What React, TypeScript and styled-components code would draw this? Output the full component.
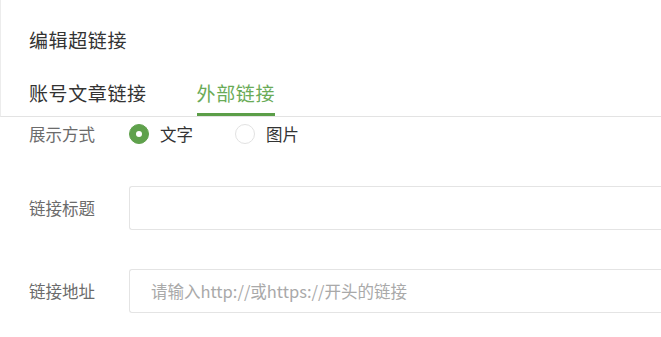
import React, { useState } from "react";
import styled, { createGlobalStyle } from "styled-components";

const Global = createGlobalStyle`
  html, body { margin: 0; padding: 0; background: #fff; overflow: hidden; }
  body { font-family: "Noto Sans CJK SC", "Noto Sans", sans-serif; }
  * { box-sizing: border-box; }
`;

const Page = styled.div`
  width: 661px;
  height: 337px;
  background: #fff;
  display: flex;
  flex-direction: column;
`;

const Header = styled.div`
  border-left: 1px solid #ececec;
  border-bottom: 1px solid #e3e3e3;
  padding: 26px 0 0 28px;
`;

const Title = styled.div`
  font-size: 19px;
  letter-spacing: 0.6px;
  line-height: 28px;
  color: #333;
`;

const Tabs = styled.div`
  display: flex;
  gap: 50px;
  margin-top: 25px;
`;

const Tab = styled.div<{ $active?: boolean }>`
  font-size: 19px;
  letter-spacing: 0.6px;
  line-height: 28px;
  padding-bottom: 6px;
  color: ${(p) => (p.$active ? "#6aab57" : "#333")};
  border-bottom: 3px solid ${(p) => (p.$active ? "#5b9e48" : "transparent")};
  cursor: pointer;
`;

const Form = styled.div`
  display: flex;
  flex-direction: column;
  padding-left: 29px;
`;

const Row = styled.div<{ $top: number; $h: number }>`
  display: flex;
  align-items: center;
  height: ${(p) => p.$h}px;
  margin-top: ${(p) => p.$top}px;
`;

const Label = styled.div`
  width: 100px;
  flex: none;
  font-size: 16.5px;
  color: #6b6b6b;
`;

const RadioGroup = styled.div`
  display: flex;
  align-items: center;
  gap: 42px;
`;

const RadioItem = styled.label`
  display: flex;
  align-items: center;
  gap: 11px;
  font-size: 16.5px;
  color: #333;
  cursor: pointer;
`;

const RadioDot = styled.span<{ $on?: boolean }>`
  width: 20px;
  height: 20px;
  border-radius: 50%;
  display: flex;
  align-items: center;
  justify-content: center;
  background: ${(p) => (p.$on ? "#5fa14c" : "#fff")};
  border: 1px solid ${(p) => (p.$on ? "#5fa14c" : "#e2e2e2")};
  &::after {
    content: "";
    width: 6px;
    height: 6px;
    border-radius: 50%;
    background: #fff;
    display: ${(p) => (p.$on ? "block" : "none")};
  }
`;

const Input = styled.input`
  flex: 1;
  min-width: 0;
  height: 100%;
  border: 1px solid #e4e4e4;
  border-right: none;
  border-radius: 3px 0 0 3px;
  padding: 0 21px;
  font-family: "Noto Sans CJK SC", "Noto Sans", sans-serif;
  font-size: 16.5px;
  color: #333;
  outline: none;
  &::placeholder { color: #a9a9a9; }
`;

export default function App() {
  const [tab, setTab] = useState(1);
  const [mode, setMode] = useState(0);
  return (
    <Page>
      <Global />
      <Header>
        <Title>编辑超链接</Title>
        <Tabs>
          <Tab $active={tab === 0} onClick={() => setTab(0)}>账号文章链接</Tab>
          <Tab $active={tab === 1} onClick={() => setTab(1)}>外部链接</Tab>
        </Tabs>
      </Header>
      <Form>
        <Row $top={0} $h={33}>
          <Label>展示方式</Label>
          <RadioGroup>
            <RadioItem onClick={() => setMode(0)}>
              <RadioDot $on={mode === 0} />
              文字
            </RadioItem>
            <RadioItem onClick={() => setMode(1)}>
              <RadioDot $on={mode === 1} />
              图片
            </RadioItem>
          </RadioGroup>
        </Row>
        <Row $top={36} $h={44}>
          <Label>链接标题</Label>
          <Input />
        </Row>
        <Row $top={39} $h={44}>
          <Label>链接地址</Label>
          <Input placeholder="请输入http://或https://开头的链接" />
        </Row>
      </Form>
    </Page>
  );
}
